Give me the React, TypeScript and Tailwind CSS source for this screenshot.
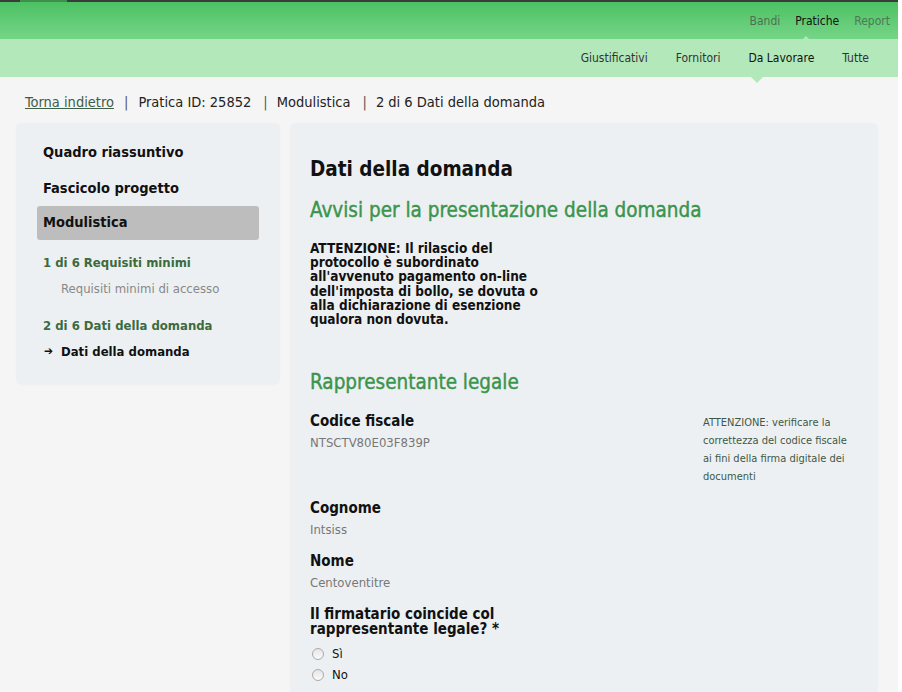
import React from "react";

const F = { fontFamily: "Tahoma, 'DejaVu Sans Condensed', 'DejaVu Sans', sans-serif" };

export default function App() {
  return (
    <div style={F} className="w-[902px] h-[692px] overflow-hidden bg-white">
      <div className="w-[898px] h-[692px] bg-[#f5f5f5] flex flex-col overflow-hidden">
        {/* top strip */}
        <div className="h-[2px] shrink-0 bg-[#3b3b3b] flex">
          <div className="ml-[20px] w-[47px] bg-[#3f8f4c]" />
        </div>
        {/* main nav */}
        <div className="h-[37px] shrink-0 bg-gradient-to-b from-[#4bc163] to-[#75d587] flex items-center justify-end pr-[8px] text-[12px] gap-[15px]">
          <span className="text-[#4b704f]">Bandi</span>
          <span className="relative text-[#111]">
            Pratiche
            <span className="absolute left-[4px] top-[24px] w-0 h-0 border-l-[7px] border-r-[7px] border-b-[7px] border-l-transparent border-r-transparent border-b-[#b3e8ba]" />
          </span>
          <span className="text-[#4a7a55]">Report</span>
        </div>
        {/* sub nav */}
        <div className="h-[38px] shrink-0 bg-[#b3e8ba] flex items-center justify-end pr-[29px] text-[12px] gap-[28px] text-[#333]">
          <span>Giustificativi</span>
          <span>Fornitori</span>
          <span className="relative text-[#111]">
            Da Lavorare
            <span className="absolute left-[1px] top-[26px] w-0 h-0 border-l-[8px] border-r-[8px] border-t-[8px] border-l-transparent border-r-transparent border-t-[#b3e8ba]" />
          </span>
          <span>Tutte</span>
        </div>
        {/* breadcrumb */}
        <div className="h-[47px] shrink-0 flex items-center pl-[25px] text-[14.5px] text-[#222] pt-[4px]">
          <span className="underline text-[#3e5e46]">Torna indietro</span>
          <span className="ml-[10px] mr-[10px] text-[#555]">|</span>
          <span>Pratica ID: 25852</span>
          <span className="ml-[12px] mr-[9px] text-[#555]">|</span>
          <span>Modulistica</span>
          <span className="ml-[12px] mr-[9px] text-[#555]">|</span>
          <span>2 di 6 Dati della domanda</span>
        </div>
        {/* body */}
        <div className="flex items-start pl-[17px] gap-[12px] shrink-0">
          {/* sidebar */}
          <div className="w-[262px] h-[260px] shrink-0 bg-[#edf0f2] rounded-[4px] shadow-[0_0_3px_rgba(0,0,0,0.06)] px-[20px] pt-[16px] flex flex-col">
            <div className="text-[14.5px] font-bold text-[#111] pl-[6px] h-[36px] leading-[24px] shrink-0">Quadro riassuntivo</div>
            <div className="text-[14.5px] font-bold text-[#111] pl-[6px] h-[30px] leading-[24px] shrink-0">Fascicolo progetto</div>
            <div className="text-[14.5px] font-bold text-[#111] pl-[6px] h-[34px] shrink-0 flex items-center bg-[#bdbdbd] rounded-[3px]">Modulistica</div>
            <div className="mt-[13px] text-[13px] font-bold text-[#3b6b3e] pl-[6px]">1 di 6 Requisiti minimi</div>
            <div className="mt-[6px] text-[13px] text-[#888] pl-[24px]">Requisiti minimi di accesso</div>
            <div className="mt-[18px] text-[13px] font-bold text-[#3b6b3e] pl-[6px]">2 di 6 Dati della domanda</div>
            <div className="mt-[6px] text-[13px] font-bold text-[#111] pl-[7px] flex items-center">
              <span className="w-[17px] text-[12px] font-bold">➔</span>
              <span>Dati della domanda</span>
            </div>
          </div>
          {/* main panel */}
          <div className="w-[586px] h-[600px] shrink-0 bg-[#edf0f2] rounded-[4px] shadow-[0_0_3px_rgba(0,0,0,0.06)] pl-[19px] pt-[31px] flex flex-col">
            <h1 className="text-[20.5px] text-[#111] leading-[28px] font-bold">Dati della domanda</h1>
            <h2 className="mt-[14px] text-[20.5px] text-[#3b944d] leading-[26px] font-normal [-webkit-text-stroke:0.4px_#3b944d]">Avvisi per la presentazione della domanda</h2>
            <p className="mt-[18px] w-[232px] text-[13.5px] font-bold leading-[14.2px] text-[#111]">
              ATTENZIONE: Il rilascio del protocollo è subordinato all'avvenuto pagamento on-line dell'imposta di bollo, se dovuta o alla dichiarazione di esenzione qualora non dovuta.
            </p>
            <h2 className="mt-[43px] text-[20.5px] text-[#3b944d] leading-[26px] font-normal [-webkit-text-stroke:0.4px_#3b944d]">Rappresentante legale</h2>
            <div className="mt-[16px] flex">
              <div className="w-[393px]">
                <div className="text-[15px] font-bold text-[#111] leading-[20px]">Codice fiscale</div>
                <div className="mt-[3px] text-[13px] text-[#777] leading-[18px]">NTSCTV80E03F839P</div>
              </div>
              <div className="w-[155px] pt-[3px] text-[11px] leading-[18px] text-[#3e5846]">
                ATTENZIONE: verificare la correttezza del codice fiscale ai fini della firma digitale dei documenti
              </div>
            </div>
            <div className="mt-[12px] text-[15px] font-bold text-[#111] leading-[20px]">Cognome</div>
            <div className="mt-[3px] text-[13px] text-[#777] leading-[18px]">Intsiss</div>
            <div className="mt-[12px] text-[15px] font-bold text-[#111] leading-[20px]">Nome</div>
            <div className="mt-[3px] text-[13px] text-[#777] leading-[18px]">Centoventitre</div>
            <div className="mt-[15px] w-[195px] text-[15px] font-bold text-[#111] leading-[15px]">Il firmatario coincide col rappresentante legale? *</div>
            <div className="mt-[10px] flex flex-col gap-[8px] pl-[2px]">
              <label className="flex items-center gap-[8px] text-[13px] text-[#111] leading-[13px]">
                <span className="w-[12px] h-[12px] rounded-full border border-[#aaa] bg-gradient-to-b from-[#e6e6e6] to-[#fafafa]" />
                Sì
              </label>
              <label className="flex items-center gap-[8px] text-[13px] text-[#111] leading-[13px]">
                <span className="w-[12px] h-[12px] rounded-full border border-[#aaa] bg-gradient-to-b from-[#e6e6e6] to-[#fafafa]" />
                No
              </label>
            </div>
          </div>
        </div>
      </div>
    </div>
  );
}
